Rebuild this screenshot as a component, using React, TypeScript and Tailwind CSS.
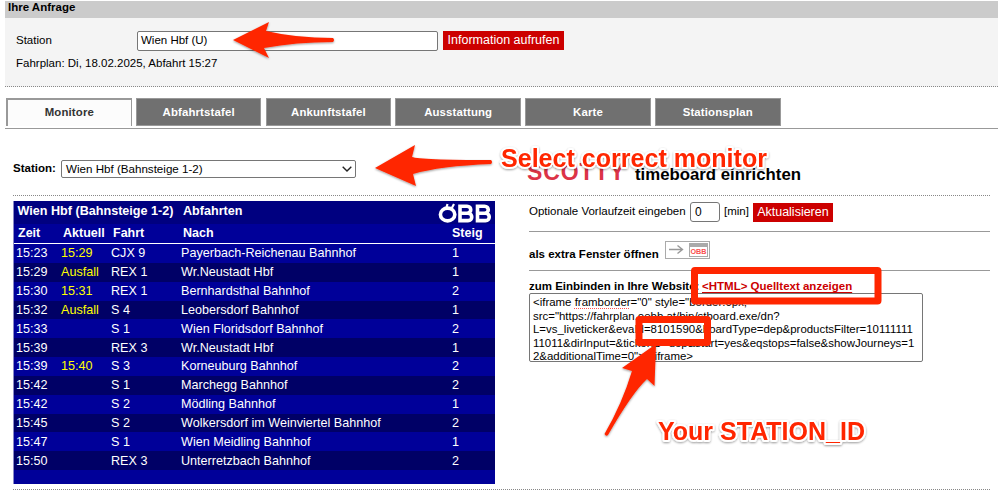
import React from "react";

type Departure = [time: string, actual: string, line: string, destination: string, platform: string];

const departures: Departure[] = [
  ["15:23", "15:29", "CJX 9", "Payerbach-Reichenau Bahnhof", "1"],
  ["15:29", "Ausfall", "REX 1", "Wr.Neustadt Hbf", "1"],
  ["15:30", "15:31", "REX 1", "Bernhardsthal Bahnhof", "2"],
  ["15:32", "Ausfall", "S 4", "Leobersdorf Bahnhof", "1"],
  ["15:33", "", "S 1", "Wien Floridsdorf Bahnhof", "2"],
  ["15:39", "", "REX 3", "Wr.Neustadt Hbf", "1"],
  ["15:39", "15:40", "S 3", "Korneuburg Bahnhof", "2"],
  ["15:42", "", "S 1", "Marchegg Bahnhof", "2"],
  ["15:42", "", "S 2", "Mödling Bahnhof", "1"],
  ["15:45", "", "S 2", "Wolkersdorf im Weinviertel Bahnhof", "2"],
  ["15:47", "", "S 1", "Wien Meidling Bahnhof", "1"],
  ["15:50", "", "REX 3", "Unterretzbach Bahnhof", "2"],
];

const tabs = ["Abfahrtstafel", "Ankunftstafel", "Ausstattung", "Karte", "Stationsplan"];

const columns = "grid grid-cols-[45px_50px_70px_271px_46px] items-center";

function RequestPanel() {
  return (
    <section className="mt-px h-[86px] border-b border-dotted border-[#888] bg-[#f4f4f4]">
      <h1 className="h-[17px] bg-[#cbcbcb] pl-[3px] text-[11.5px] leading-[13px] font-bold">Ihre Anfrage</h1>
      <div className="flex h-[44px] items-center pl-[11px]">
        <span className="mt-[2px] w-[121px]">Station</span>
        <div className="mt-[1px] flex h-[20px] w-[301px] items-center rounded-[2px] border border-[#767676] bg-white pl-[3px]">
          Wien Hbf (U)
        </div>
        <button className="mt-px ml-[5px] h-[19px] w-[121px] bg-[#cc0000] text-[12.5px] leading-[19px] whitespace-nowrap text-white">
          Information aufrufen
        </button>
      </div>
      <p className="-mt-[6px] pl-[11px] leading-[14px]">Fahrplan: Di, 18.02.2025, Abfahrt 15:27</p>
    </section>
  );
}

function Tabs() {
  return (
    <nav className="mt-[11px] flex h-[31px] gap-[4.1px] border-b border-[#999] pl-px text-[11.4px] leading-[27px] font-bold tracking-[0.15px]">
      <div className="h-[28px] w-[125.7px] border-2 border-r border-b-0 border-[#999] bg-[#fcfcfc] text-center leading-[25px] text-[#333]">Monitore</div>
      {tabs.map((t) => (
        <div key={t} className="h-[28px] w-[125.7px] border border-[#999] bg-[#707070] text-center text-white">
          {t}
        </div>
      ))}
    </nav>
  );
}

function ObbLogo() {
  return (
    <svg width="54" height="21" viewBox="0 0 54 21" fill="none" stroke="#fff" strokeWidth="3.6">
      <ellipse cx="9.6" cy="12.5" rx="7.2" ry="6.4" />
      <path d="M8 7 9.5 2M13 7.5 16 2" strokeWidth="2.2" />
      <path d="M22 4.2h7c5 0 5 7 0 7h-7m0 0h8c5 0 5 7.4 0 7.4h-8zM22 2.4v18M39.5 4.2h7c5 0 5 7 0 7h-7m0 0h8c5 0 5 7.4 0 7.4h-8zM39.5 2.4v18" />
    </svg>
  );
}

function Board() {
  return (
    <section className="h-[283px] w-[482px] border-l border-[#8888c8] bg-[#000099] text-[12.6px] text-white">
      <div className="flex h-[23px] items-center bg-[#000080] pl-[3.5px] text-[12.6px] font-bold">
        <span className="mb-[3px] w-[165.5px] whitespace-nowrap">Wien Hbf (Bahnsteige 1-2)</span>
        <span className="mb-[3px] flex-1">Abfahrten</span>
        <div className="mr-[3px]"><ObbLogo /></div>
      </div>
      <div className={`${columns} h-[20px] border-b border-white pb-[2px] pl-[4px] text-[12.5px] font-bold`}>
        <span>Zeit</span>
        <span>Aktuell</span>
        <span>Fahrt</span>
        <span>Nach</span>
        <span className="-ml-[2px]">Steig</span>
      </div>
      {departures.map(([time, actual, line, destination, platform], i) => (
        <div key={i} className={`${columns} h-[18.85px] pl-[2px] leading-[18px] ${i % 2 ? "bg-[#000066]" : "bg-[#000099]"}`}>
          <span>{time}</span>
          <span className="text-[#ffff00]">{actual}</span>
          <span>{line}</span>
          <span>{destination}</span>
          <span>{platform}</span>
        </div>
      ))}
    </section>
  );
}

function WindowIcon() {
  return (
    <svg width="45" height="18" viewBox="0 0 45 18">
      <rect x=".5" y=".5" width="44" height="17" fill="#fff" stroke="#aaa" />
      <path d="M4 8.5h13M12.5 4.5l5 4-5 4" fill="none" stroke="#999" strokeWidth="1.4" />
      <rect x="24.5" y="2.5" width="18" height="13" fill="#fff" stroke="#aaa" />
      <path d="M24 2h19v4H24z" fill="#aaa" />
      <text x="25.5" y="12.8" textLength="16" lengthAdjust="spacingAndGlyphs" fontSize="7" fontWeight="bold" fontFamily="Liberation Sans, sans-serif" fill="#fa5050">OBB</text>
    </svg>
  );
}

function Embed() {
  return (
    <section className="w-[461px]">
      <div className="flex h-[31px] items-center border-b border-[#999]">
        <span className="mb-[8px] w-[161px] whitespace-nowrap">Optionale Vorlaufzeit eingeben</span>
        <div className="mb-[8px] h-[20px] w-[30px] rounded-[3px] border border-[#767676] pl-[4px] text-[12px] leading-[18px]">0</div>
        <span className="mb-[8px] ml-[4px]">[min]</span>
        <button className="mb-[8px] ml-[4px] h-[19px] w-[80px] bg-[#cc0000] text-[12.5px] leading-[19px] text-white">Aktualisieren</button>
      </div>
      <div className="flex h-[39px] items-center border-b border-[#999] font-bold">
        <span className="mt-[8px] w-[136px] whitespace-nowrap">als extra Fenster öffnen</span>
        <div className="-mt-[2px]"><WindowIcon /></div>
      </div>
      <div className="flex h-[22px] items-end font-bold whitespace-nowrap">
        <span className="w-[173px] leading-[14px]">zum Einbinden in Ihre Website:</span>
        <a className="leading-[14px] text-[#cc0000] underline underline-offset-2">&lt;HTML&gt; Quelltext anzeigen</a>
      </div>
      <pre className="h-[69px] w-[394px] overflow-hidden rounded-[2px] border border-[#767676] pt-[2px] pl-[3px] font-['Liberation_Sans',sans-serif] text-[11.45px] leading-[13.6px]">
        {"<iframe "}
        <span className="underline decoration-[#ff5050] decoration-dotted underline-offset-2">framborder</span>
        {'="0" style="border:0px;\nsrc="https://fahrplan.oebb.at/bin/stboard.exe/dn?\nL=vs_liveticker&evaId=8101590&boardType=dep&productsFilter=10111111\n11011&dirInput=&tickerID=dep&start=yes&eqstops=false&showJourneys=1\n2&additionalTime=0"></iframe>'}
      </pre>
    </section>
  );
}

function Annotations() {
  return (
    <svg className="pointer-events-none absolute inset-0" width="1000" height="492" viewBox="0 0 1000 492" fontFamily="Liberation Sans, Arial, sans-serif">
      <defs>
        <filter id="soft" x="-10%" y="-20%" width="120%" height="150%">
          <feDropShadow dx="0" dy="1" stdDeviation="0.8" floodColor="#000" floodOpacity=".4" />
        </filter>
      </defs>
      <g fill="#ff2600" filter="url(#soft)">
        <path d="M233 40 269 22 266 31Q296 38 333 38Q335 40 333 42Q296 42 264 48L269 58Z" />
        <path d="M375 168 415 145 412 157Q420 160 491 160Q493 162 491 164Q440 166 413 174L416 186Z" />
        <path d="M656 344 654.5 386 647 379Q632 393 608 435Q606 437 604.5 434Q622 404 632 371L622 368Z" />
      </g>
      <g fill="none" stroke="#ff2600" strokeWidth="7">
        <rect x="694.5" y="270.5" width="183.5" height="30.5" rx=".5" />
        <rect x="639" y="319.5" width="68.5" height="23" rx=".5" />
      </g>
      <g fill="#ff2600" stroke="#fff" strokeWidth="4" strokeLinejoin="round" paintOrder="stroke" fontSize="25.5" fontWeight="bold" filter="url(#soft)">
        <text x="501" y="167" textLength="266" lengthAdjust="spacingAndGlyphs">Select correct monitor</text>
        <text x="658" y="440" textLength="207" lengthAdjust="spacingAndGlyphs">Your STATION_ID</text>
      </g>
    </svg>
  );
}

export default function App() {
  return (
    <main className="relative h-[492px] w-[1000px] overflow-hidden bg-white pr-[2px] pl-[5px] font-['Liberation_Sans',Arial,sans-serif] text-[11.5px] text-black">
      <RequestPanel />
      <Tabs />
      <div className="mr-[8px] ml-[8px] flex h-[67px] border-b border-dotted border-[#888]">
        <div className="flex w-[514px] pt-[31px]">
          <span className="w-[48px] leading-[16px] font-bold">Station:</span>
          <div className="flex h-[18px] w-[295px] items-center justify-between rounded-[2px] border border-[#767676] pr-[3px] pl-[4px] text-[11.6px]">
            Wien Hbf (Bahnsteige 1-2)
            <svg width="10" height="6" viewBox="0 0 10 6" fill="none" stroke="#222" strokeWidth="1.4"><path d="M.7.7 5 5 9.3.7" /></svg>
          </div>
        </div>
        <h2 className="flex items-baseline pt-[29px] font-bold whitespace-nowrap">
          <span className="inline-block w-[108px] text-[23px] leading-[28px] tracking-[0.9px] text-[#dc3347]">SCOTTY</span>
          <span className="text-[16.8px]">timeboard einrichten</span>
        </h2>
      </div>
      <div className="mr-[8px] ml-[8px] flex h-[294px] border-b border-dotted border-[#888]">
        <div className="w-[516px] pt-[5px]"><Board /></div>
        <div className="pt-[5px]"><Embed /></div>
      </div>
      <Annotations />
    </main>
  );
}
